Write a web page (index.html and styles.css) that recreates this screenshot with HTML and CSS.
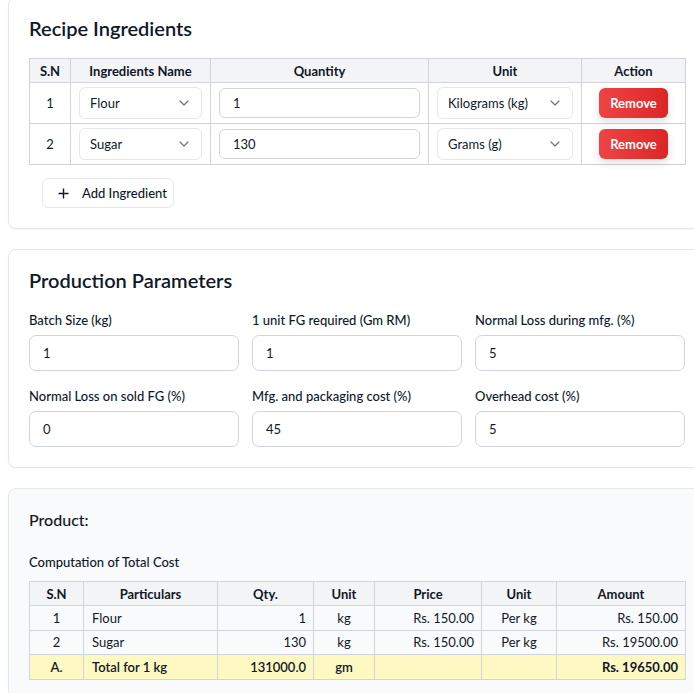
FILE: index.html
```html
<!DOCTYPE html>
<html lang="en">
<head>
<meta charset="utf-8">
<title>Recipe Costing</title>
<link rel="stylesheet" href="styles.css">
</head>
<body>
<div class="page">
  <section class="card card-first">
    <h2 class="card-title">Recipe Ingredients</h2>
    <table class="tbl ing-table">
      <colgroup>
        <col class="w-sn"><col class="w-name"><col class="w-qty"><col class="w-unit"><col class="w-act">
      </colgroup>
      <thead>
        <tr><th>S.N</th><th>Ingredients Name</th><th>Quantity</th><th>Unit</th><th>Action</th></tr>
      </thead>
      <tbody>
        <tr>
          <td class="center">1</td>
          <td><div class="select"><span>Flour</span><svg class="chev" width="10" height="6" viewBox="0 0 10 6"><path d="M1 1l4 4 4-4" fill="none" stroke="#6b7280" stroke-width="1.2" stroke-linecap="round" stroke-linejoin="round"/></svg></div></td>
          <td><div class="input">1</div></td>
          <td><div class="select"><span>Kilograms (kg)</span><svg class="chev" width="10" height="6" viewBox="0 0 10 6"><path d="M1 1l4 4 4-4" fill="none" stroke="#6b7280" stroke-width="1.2" stroke-linecap="round" stroke-linejoin="round"/></svg></div></td>
          <td class="center"><button class="btn-remove">Remove</button></td>
        </tr>
        <tr>
          <td class="center">2</td>
          <td><div class="select"><span>Sugar</span><svg class="chev" width="10" height="6" viewBox="0 0 10 6"><path d="M1 1l4 4 4-4" fill="none" stroke="#6b7280" stroke-width="1.2" stroke-linecap="round" stroke-linejoin="round"/></svg></div></td>
          <td><div class="input">130</div></td>
          <td><div class="select"><span>Grams (g)</span><svg class="chev" width="10" height="6" viewBox="0 0 10 6"><path d="M1 1l4 4 4-4" fill="none" stroke="#6b7280" stroke-width="1.2" stroke-linecap="round" stroke-linejoin="round"/></svg></div></td>
          <td class="center"><button class="btn-remove">Remove</button></td>
        </tr>
      </tbody>
    </table>
    <button class="btn-add"><svg width="11" height="11" viewBox="0 0 11 11"><path d="M5.5 0.5v10M0.5 5.5h10" stroke="#111827" stroke-width="1.4"/></svg><span>Add Ingredient</span></button>
  </section>

  <section class="card">
    <h2 class="card-title params-title">Production Parameters</h2>
    <div class="params">
      <div class="field"><label>Batch Size (kg)</label><div class="input field-input">1</div></div>
      <div class="field"><label>1 unit FG required (Gm RM)</label><div class="input field-input">1</div></div>
      <div class="field"><label>Normal Loss during mfg. (%)</label><div class="input field-input">5</div></div>
      <div class="field"><label>Normal Loss on sold FG (%)</label><div class="input field-input">0</div></div>
      <div class="field"><label>Mfg. and packaging cost (%)</label><div class="input field-input">45</div></div>
      <div class="field"><label>Overhead cost (%)</label><div class="input field-input">5</div></div>
    </div>
  </section>

  <section class="card card-muted">
    <h3 class="product-title">Product:</h3>
    <h4 class="sub-title">Computation of Total Cost</h4>
    <table class="tbl cost-table">
      <colgroup>
        <col class="c1"><col class="c2"><col class="c3"><col class="c4"><col class="c5"><col class="c6"><col class="c7">
      </colgroup>
      <thead>
        <tr><th>S.N</th><th>Particulars</th><th>Qty.</th><th>Unit</th><th>Price</th><th>Unit</th><th>Amount</th></tr>
      </thead>
      <tbody>
        <tr><td class="center">1</td><td>Flour</td><td class="right">1</td><td class="center">kg</td><td class="right">Rs. 150.00</td><td class="center">Per kg</td><td class="right">Rs. 150.00</td></tr>
        <tr><td class="center">2</td><td>Sugar</td><td class="right">130</td><td class="center">kg</td><td class="right">Rs. 150.00</td><td class="center">Per kg</td><td class="right">Rs. 19500.00</td></tr>
        <tr class="total"><td class="center">A.</td><td>Total for 1 kg</td><td class="right">131000.0</td><td class="center">gm</td><td></td><td></td><td class="right strong">Rs. 19650.00</td></tr>
      </tbody>
    </table>
  </section>
</div>
</body>
</html>
```

FILE: styles.css
```css
html {
  overflow: hidden;
}

body {
  margin: 0;
  padding: 0 8px;
  background: #ffffff;
  color: #111827;
  font-family: Lato, "Noto Sans", "Liberation Sans", sans-serif;
  font-size: 13px;
}

.page {
  width: 698px;
  display: flex;
  flex-direction: column;
  gap: 20px;
  margin-top: -3px;
}

.card {
  border: 1px solid #e5e7eb;
  border-radius: 8px;
  padding: 20px;
  background: #ffffff;
  box-shadow: 0 1px 2px rgba(0, 0, 0, 0.04);
}

.card-muted {
  background: #f9fafb;
  min-height: 300px;
}

.card-title {
  margin: 0 0 20px;
  font-size: 20px;
  line-height: 20px;
  font-weight: 600;
  color: #111827;
}

.params-title {
  margin-bottom: 22px;
}

/* tables */
.tbl {
  width: 656px;
  border-collapse: collapse;
  table-layout: fixed;
  font-size: 13px;
}

.tbl th,
.tbl td {
  border: 1px solid #d1d5db;
  padding: 0 8px;
}

.tbl th {
  background: #f3f4f6;
  font-weight: 700;
  text-align: center;
  height: 23px;
}

.center { text-align: center; }
.right { text-align: right; }

.ing-table tbody td {
  height: 40px;
}

.w-sn { width: 41px; }
.w-name { width: 140px; }
.w-qty { width: 218px; }
.w-unit { width: 153px; }
.w-act { width: 104px; }

.select,
.input {
  box-sizing: border-box;
  display: flex;
  align-items: center;
  border-radius: 6px;
  background: #ffffff;
  color: #111827;
}

.select {
  height: 32px;
  padding: 0 12px 0 10px;
  border: 1px solid #e5e7eb;
  justify-content: space-between;
}

.input {
  height: 30px;
  padding: 0 13px;
  border: 1px solid #d1d5db;
}

.chev {
  flex: none;
}

.btn-remove {
  width: 69px;
  height: 30px;
  border: none;
  border-radius: 6px;
  background: linear-gradient(90deg, #ef4444, #dc2626);
  color: #ffffff;
  font-family: inherit;
  font-size: 13px;
  font-weight: 700;
  box-shadow: 0 4px 8px rgba(0, 0, 0, 0.12);
  vertical-align: middle;
}

.btn-add {
  margin: 13px 0 0 13px;
  height: 30px;
  width: 132px;
  display: flex;
  align-items: center;
  gap: 13px;
  padding: 0 0 0 15px;
  border: 1px solid #e5e7eb;
  border-radius: 6px;
  background: #ffffff;
  font-family: inherit;
  font-size: 13px;
  font-weight: 500;
  color: #111827;
}

/* production parameters */
.params {
  display: grid;
  grid-template-columns: repeat(3, 1fr);
  column-gap: 13px;
  row-gap: 17px;
}

.field {
  display: flex;
  flex-direction: column;
  gap: 7px;
}

.field label {
  font-size: 13px;
  line-height: 16px;
  font-weight: 500;
  color: #111827;
}

.field-input {
  height: 36px;
  border-radius: 7px;
}

/* product cost */
.product-title {
  margin: 0 0 24px;
  font-size: 16px;
  line-height: 21px;
  font-weight: 500;
}

.sub-title {
  margin: 0 0 11px;
  font-size: 13px;
  line-height: 16px;
  font-weight: 500;
}

.cost-table th {
  height: 23px;
  padding: 0 7px;
}

.cost-table td {
  height: 23.5px;
  padding: 0 7px;
}

.cost-table td:nth-child(2) {
  padding-left: 8px;
}

.cost-table tbody tr {
  background: #f9fafb;
}

.cost-table .total {
  background: #fef9c3;
  font-weight: 600;
}

.cost-table .strong {
  font-weight: 700;
}

.c1 { width: 54px; }
.c2 { width: 134px; }
.c3 { width: 96px; }
.c4 { width: 61px; }
.c5 { width: 107px; }
.c6 { width: 75px; }
.c7 { width: 129px; }
```
